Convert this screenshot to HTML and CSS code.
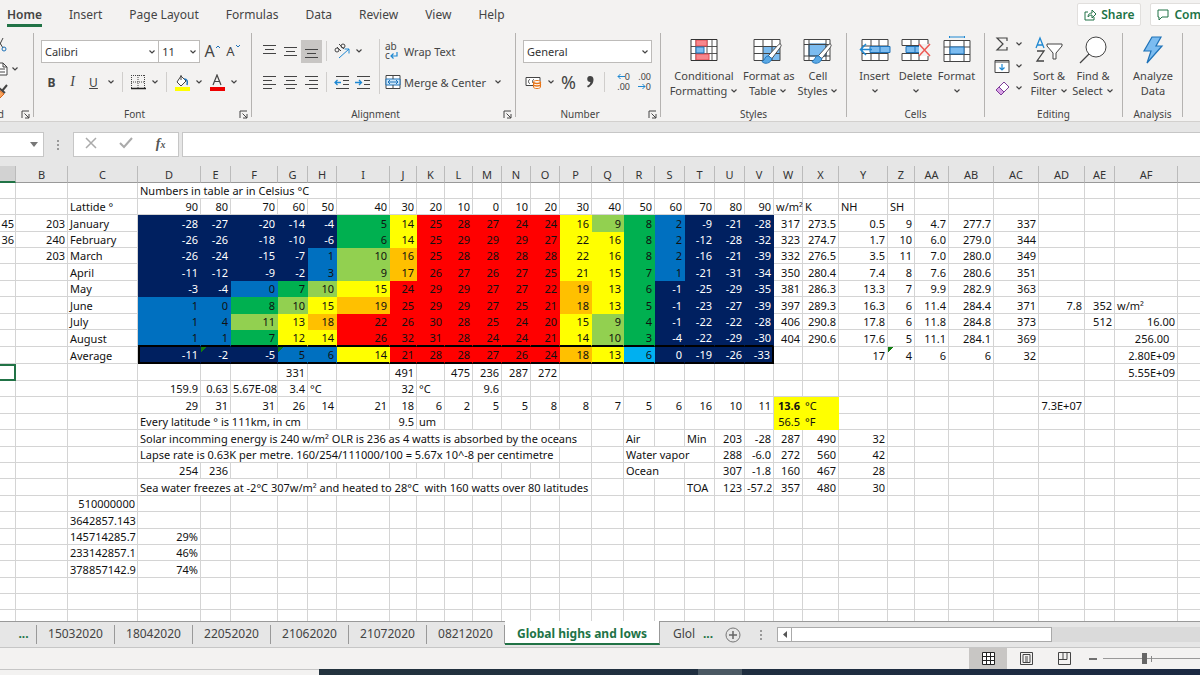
FILE: index.html
```html
<!DOCTYPE html>
<html lang="en">
<head>
    <meta charset="UTF-8">
    <meta name="viewport" content="width=device-width, initial-scale=1.0">
    <title>Global highs and lows</title>
    <link rel="stylesheet" href="styles.css">
</head>
<body>
    <svg class="defs" aria-hidden="true">
        <symbol id="chev" viewBox="0 0 8 6"><path d="M1.5 1.5 4 4l2.500-2.500" fill="none" stroke="#444" stroke-width="1.200"/></symbol>
        <symbol id="launch" viewBox="0 0 9 9"><path d="M1 8V1h7M3.500 3.500 8 8M8 4v4H4" fill="none" stroke="#444"/></symbol>
        <symbol id="brush" viewBox="0 0 24 24"><path d="M22 1c2 1 1 2 0 4l-9 12-4-3L19 3c1-1 2-2 3-2z" fill="#fff" stroke="#444"/><path d="M9 14c-4 0-3 5-7 6 3 4 10 2 11-3z" fill="#5aa9e6" stroke="#1e72b8"/></symbol>
    </svg>

    <nav class="tabs">
        <a href="#" class="active">Home</a>
        <a href="#">Insert</a>
        <a href="#">Page Layout</a>
        <a href="#">Formulas</a>
        <a href="#">Data</a>
        <a href="#">Review</a>
        <a href="#">View</a>
        <a href="#">Help</a>
        <div class="tab-actions">
            <button type="button"><svg width="13" height="12" viewBox="0 0 13 12"><path d="M4 3H1v8h9V8M4 8c0-3 2-4 4-4V1l4 4-4 4V6C6 6 5 7 4 8z" fill="none" stroke="#217346"/></svg>Share</button>
            <button type="button"><svg width="13" height="12" viewBox="0 0 13 12"><path d="M1 1h10v7H5l-3 3V8H1z" fill="none" stroke="#217346"/></svg>Comments</button>
        </div>
    </nav>

    <div class="ribbon">
        <section class="group clipboard">
            <div class="group-body clip-icons">
                <svg width="14" height="16" viewBox="0 0 14 16"><path d="M2 1l6 10" stroke="#444" fill="none"/><circle cx="9" cy="12" r="2" fill="none" stroke="#1e72b8"/><path d="M8 1 4 9" stroke="#444"/></svg>
                <div class="clip-copy"><svg width="20" height="15" viewBox="0 0 20 15"><path d="M8 2h6l4 4v8H8zM14 2v4h4M10 8h6M10 11h6" fill="#fff" stroke="#444"/></svg><svg class="chev"><use href="#chev"/></svg></div>
                <svg width="20" height="15" viewBox="0 0 20 15"><path d="m18 1-5 6M10 4l6 5" stroke="#444" stroke-width="2"/><path d="M10 6 7 12l4 2 4-4z" fill="#f7a35c" stroke="#d8641b"/></svg>
            </div>
            <footer><span class="clip-name">Clipboard</span><svg class="launch"><use href="#launch"/></svg></footer>
        </section>

        <section class="group font">
            <div class="group-body">
                <div class="row">
                    <div class="combo font-name"><select aria-label="Font"><option>Calibri</option></select><svg class="chev"><use href="#chev"/></svg></div>
                    <div class="combo font-size"><select aria-label="Font size"><option>11</option></select><svg class="chev"><use href="#chev"/></svg></div>
                    <button type="button" class="tool big-a" aria-label="Increase font size">A<svg width="6" height="5" viewBox="0 0 6 5"><path d="M1 4l2-2 2 2" fill="none" stroke="#1e72b8"/></svg></button>
                    <button type="button" class="tool small-a" aria-label="Decrease font size">A<svg width="6" height="5" viewBox="0 0 6 5"><path d="M1 1l2 2 2-2" fill="none" stroke="#1e72b8"/></svg></button>
                </div>
                <div class="row">
                    <button type="button" class="tool bold">B</button>
                    <button type="button" class="tool italic">I</button>
                    <button type="button" class="tool underline">U</button>
                    <button type="button" class="drop" aria-label="Underline options"><svg class="chev"><use href="#chev"/></svg></button>
                    <i class="sep"></i>
                    <button type="button" class="tool" aria-label="Borders"><svg width="16" height="16" viewBox="0 0 16 16"><path d="M1 1.500h14M1 8h14M1.500 1v13M8 1v13M14.500 1v13" stroke="#444" stroke-dasharray="1 1"/><path d="M1 14.500h15" stroke="#222" stroke-width="1.500"/></svg></button>
                    <button type="button" class="drop" aria-label="Border options"><svg class="chev"><use href="#chev"/></svg></button>
                    <i class="sep"></i>
                    <button type="button" class="tool" aria-label="Fill color"><svg width="16" height="17" viewBox="0 0 16 17"><path d="M7 2 3 8l4 4 5-5zM7 1v5" fill="#fff" stroke="#444"/><path d="M10 5c3 0 4 2 3 6" fill="none" stroke="#1e72b8" stroke-width="1.500"/><path d="M1 13h15v4H1z" fill="#ff0"/></svg></button>
                    <button type="button" class="drop" aria-label="Fill options"><svg class="chev"><use href="#chev"/></svg></button>
                    <button type="button" class="tool" aria-label="Font color"><svg width="16" height="17" viewBox="0 0 16 17"><path d="M4 11 8 1l4 10M5.500 7.500h5" fill="none" stroke="#444" stroke-width="1.200"/><path d="M1 13h15v4H1z" fill="#e00"/></svg></button>
                    <button type="button" class="drop" aria-label="Font color options"><svg class="chev"><use href="#chev"/></svg></button>
                </div>
            </div>
            <footer class="has-launch">Font<svg class="launch"><use href="#launch"/></svg></footer>
        </section>

        <section class="group alignment">
            <div class="group-body columns">
                <div class="align-left">
                    <div class="row">
                        <button type="button" class="tool" aria-label="Top align"><svg width="15" height="16"><path d="M1 2.500h13M3 6.500h9M1 10.500h13" stroke="#444"/></svg></button>
                        <button type="button" class="tool" aria-label="Middle align"><svg width="15" height="16"><path d="M1 4.500h13M3 8.500h9M1 12.500h13" stroke="#444"/></svg></button>
                        <button type="button" class="tool on" aria-label="Bottom align"><svg width="15" height="16"><path d="M1 6.500h13M3 10.500h9M1 14.500h13" stroke="#444"/></svg></button>
                        <i class="sep"></i>
                        <button type="button" class="tool" aria-label="Orientation"><svg width="18" height="17" viewBox="0 0 18 17"><circle cx="4" cy="7" r="2" fill="none" stroke="#444"/><path d="m4 4 4 4M6 1l5 5" stroke="#444"/><circle cx="10" cy="3" r="2" fill="none" stroke="#444"/><path d="M6 15 16 6M11.500 6H16v4.500" fill="none" stroke="#1e88d2"/></svg></button>
                        <button type="button" class="drop" aria-label="Orientation options"><svg class="chev"><use href="#chev"/></svg></button>
                    </div>
                    <div class="row">
                        <button type="button" class="tool" aria-label="Align left"><svg width="15" height="16"><path d="M1 2.500h13M1 6.500h9M1 10.500h13M1 14.500h9" stroke="#444"/></svg></button>
                        <button type="button" class="tool" aria-label="Center"><svg width="15" height="16"><path d="M1 2.500h13M3 6.500h9M1 10.500h13M3 14.500h9" stroke="#444"/></svg></button>
                        <button type="button" class="tool" aria-label="Align right"><svg width="15" height="16"><path d="M1 2.500h13M5 6.500h9M1 10.500h13M5 14.500h9" stroke="#444"/></svg></button>
                        <i class="sep"></i>
                        <button type="button" class="tool" aria-label="Decrease indent"><svg width="16" height="16"><path d="M2 2.500h13M9 6.500h6M9 10.500h6M2 14.500h13" stroke="#444"/><path d="M7 8.500H1M3.500 6 1 8.500 3.500 11" fill="none" stroke="#1e88d2" stroke-width="1.300"/></svg></button>
                        <button type="button" class="tool" aria-label="Increase indent"><svg width="16" height="16"><path d="M2 2.500h13M9 6.500h6M9 10.500h6M2 14.500h13" stroke="#444"/><path d="M0 8.500h6M4 6l2.500 2.500L4 11" fill="none" stroke="#1e88d2" stroke-width="1.300"/></svg></button>
                    </div>
                </div>
                <div class="align-right">
                    <div class="row">
                        <button type="button" class="labelled"><span class="wrap-icon" aria-hidden="true">ab<br>c<svg width="8" height="7" viewBox="0 0 8 7"><path d="M7 0v4H1M3.500 1.500 1 4l2.500 2.500" fill="none" stroke="#1e88d2" stroke-width="1.200"/></svg></span>Wrap Text</button>
                    </div>
                    <div class="row">
                        <button type="button" class="labelled"><svg width="16" height="16"><path d="M1 1.500h14v13H1z" fill="#fff" stroke="#444"/><path d="M1 5h14v6H1z" fill="#cfe8fa" stroke="#1e72b8"/><path d="M8 1v4M8 11v4" stroke="#444"/><path d="M3 8h10M5 6 3 8l2 2M11 6l2 2-2 2" fill="none" stroke="#1e72b8"/></svg>Merge &amp; Center</button>
                        <button type="button" class="drop" aria-label="Merge options"><svg class="chev"><use href="#chev"/></svg></button>
                    </div>
                </div>
            </div>
            <footer class="has-launch">Alignment<svg class="launch"><use href="#launch"/></svg></footer>
        </section>

        <section class="group number">
            <div class="group-body">
                <div class="row">
                    <div class="combo number-format"><select aria-label="Number format"><option>General</option></select><svg class="chev"><use href="#chev"/></svg></div>
                </div>
                <div class="row">
                    <button type="button" class="tool" aria-label="Accounting format"><svg width="17" height="15" viewBox="0 0 17 15"><path d="M1 2.500h14v8H1z" fill="#fff" stroke="#444"/><path d="M5 4.500c-2 0-2 4 0 4M9 4.500c-2 0-2 4 0 4" fill="none" stroke="#444"/><path d="M8.500 7c0-2 7-2 7 0v5c0 2-7 2-7 0z" fill="#fff" stroke="#e8761b"/><path d="M8.500 7c0 2 7 2 7 0M8.500 9.500c0 2 7 2 7 0" fill="none" stroke="#e8761b" stroke-width="1.500"/></svg></button>
                    <button type="button" class="drop" aria-label="Currency options"><svg class="chev"><use href="#chev"/></svg></button>
                    <button type="button" class="tool percent">%</button>
                    <button type="button" class="tool" aria-label="Comma style"><svg width="10" height="14" viewBox="0 0 10 14"><path d="M5 1a3 3 0 1 0 .5 6C5 9 4 10 2 11l1 1.500c3-1.500 5.500-4 5.500-8C8.500 2 7 1 5 1z" fill="#444"/></svg></button>
                    <i class="sep"></i>
                    <button type="button" class="tool decimals"><svg width="8" height="7" viewBox="0 0 8 7"><path d="M8 3.500H1M3.500 1 1 3.500 3.500 6" fill="none" stroke="#1e88d2"/></svg>0<br>.00</button>
                    <button type="button" class="tool decimals">.00<br><svg width="8" height="7" viewBox="0 0 8 7"><path d="M0 3.500h7M4.500 1 7 3.500 4.500 6" fill="none" stroke="#1e88d2"/></svg>0</button>
                </div>
            </div>
            <footer class="has-launch">Number<svg class="launch"><use href="#launch"/></svg></footer>
        </section>

        <section class="group styles">
            <div class="group-body columns">
                <button type="button" class="large wide"><svg width="28" height="28" viewBox="0 0 28 28"><g transform="translate(0 2)"><path d="M1 1.500h26v21H1z" fill="#fff"/><path d="M1 8.500h26M1 15.500h26M6 1v22M17 1v22M22 1v22" stroke="#555"/><path d="M6 2h11v6H6zM6 16h13v6H6z" fill="#f7868c" stroke="#e04a52"/><path d="M6 9h8v6H6z" fill="#7cbcf0" stroke="#1e72b8"/><path d="M1 1.500h26v21H1z" fill="none" stroke="#333"/></g></svg>Conditional<br><span>Formatting<svg class="chev"><use href="#chev"/></svg></span></button>
                <button type="button" class="large mid"><svg width="30" height="28" viewBox="0 0 30 28"><path d="M1 3.500h26v21H1z" fill="#fff"/><path d="M10 11h17v14H10z" fill="#7cbcf0"/><path d="M1 10.500h26M1 17.500h26M10 3v21M19 3v21M1 3.500h26v21H1z" fill="none" stroke="#444"/><use href="#brush" x="7" y="7" width="22" height="22"/></svg>Format as<br><span>Table<svg class="chev"><use href="#chev"/></svg></span></button>
                <button type="button" class="large mid"><svg width="30" height="28" viewBox="0 0 30 28"><path d="M1 3.500h26v21H1z" fill="#fff"/><path d="M6 8h17v12H6z" fill="#7cbcf0" stroke="#1e72b8"/><path d="M1 8.500h26M6 3v21M1 20h26M23 3v21M1 3.500h26v21H1z" fill="none" stroke="#444"/><use href="#brush" x="7" y="7" width="22" height="22"/></svg>Cell<br><span>Styles<svg class="chev"><use href="#chev"/></svg></span></button>
            </div>
            <footer>Styles</footer>
        </section>

        <section class="group cells">
            <div class="group-body columns">
                <button type="button" class="large"><svg width="32" height="28" viewBox="0 0 32 28"><g transform="translate(0 2)"><path d="M3 1.500h26v21H3zM3 8h26M3 15.500h26M12 1v7M20 1v7M12 15v7M20 15v7" fill="#fff" stroke="#444"/><path d="M11 8.500h20v6H11z" fill="#7cbcf0" stroke="#1e72b8"/><path d="M21 8v7" stroke="#1e72b8"/><path d="M13 11.500H2M7 6l-5.500 5.500L7 17" fill="none" stroke="#1e88d2" stroke-width="1.500"/></g></svg>Insert<br><svg class="chev"><use href="#chev"/></svg></button>
                <button type="button" class="large"><svg width="30" height="28" viewBox="0 0 30 28"><g transform="translate(0 2)"><path d="M1 1.500h26v6H1zM1 15.500h26v7H1zM10 1v7M18 1v7M10 15v7M18 15v7" fill="#fff" stroke="#444"/><path d="M5 8.500h14v6H5z" fill="#7cbcf0" stroke="#1e72b8"/><path d="M14 8v7" stroke="#1e72b8"/><path d="M18 6h12v12H18z" fill="#f3f2f1"/><path d="m18 6 11 12M29 6 18 18" stroke="#ee5a55" stroke-width="1.500"/></g></svg>Delete<br><svg class="chev"><use href="#chev"/></svg></button>
                <button type="button" class="large"><svg width="28" height="28" viewBox="0 0 28 28"><path d="M1 4.500h26v21H1zM1 11h26M1 18.500h26M7 4v21M21 4v21" fill="#fff" stroke="#444"/><path d="M7 11h14v7H7z" fill="#7cbcf0" stroke="#1e72b8"/><path d="M7 1h14M6.500 0v2M21.500 0v2" stroke="#1e88d2"/></svg>Format<br><svg class="chev"><use href="#chev"/></svg></button>
            </div>
            <footer>Cells</footer>
        </section>

        <section class="group editing">
            <div class="group-body columns">
                <div class="edit-tools">
                    <button type="button" aria-label="AutoSum"><svg width="16" height="15" viewBox="0 0 16 15"><path d="M13 4V1H3l6 6-6 6h10v-3" fill="none" stroke="#444" stroke-width="1.200"/></svg><svg class="chev"><use href="#chev"/></svg></button>
                    <button type="button" aria-label="Fill"><svg width="16" height="15" viewBox="0 0 16 15"><path d="M1 1.500h14v12H1z" fill="#fff" stroke="#444"/><path d="M1 3h14" stroke="#444"/><path d="M8 5v6M5.500 8.500 8 11l2.500-2.500" fill="none" stroke="#1e88d2" stroke-width="1.200"/></svg><svg class="chev"><use href="#chev"/></svg></button>
                    <button type="button" aria-label="Clear"><svg width="16" height="15" viewBox="0 0 16 15"><path d="m10 1 5 5-8 8-5-5z" fill="#fff" stroke="#7d3c98"/><path d="m5 6 5 5-3 3-5-5z" fill="#d9a3e6" stroke="#7d3c98"/></svg><svg class="chev"><use href="#chev"/></svg></button>
                </div>
                <button type="button" class="large"><svg width="30" height="28" viewBox="0 0 30 28"><path d="m2 12 4-10 4 10M3.500 9h5" fill="none" stroke="#1e88d2" stroke-width="1.300"/><path d="M3 15h7L3 25h7" fill="none" stroke="#444" stroke-width="1.300"/><path d="M13 8h15v2l-6 7v6h-3v-6l-6-7z" fill="#fff" stroke="#444"/></svg>Sort &amp;<br><span>Filter<svg class="chev"><use href="#chev"/></svg></span></button>
                <button type="button" class="large"><svg width="30" height="28" viewBox="0 0 30 28"><circle cx="18" cy="11" r="10" fill="#fff" stroke="#444"/><path d="m11 18-9 9" stroke="#444" stroke-width="1.200"/></svg>Find &amp;<br><span>Select<svg class="chev"><use href="#chev"/></svg></span></button>
            </div>
            <footer>Editing</footer>
        </section>

        <section class="group analysis">
            <div class="group-body columns">
                <button type="button" class="large"><svg width="24" height="28" viewBox="0 0 24 28"><path d="M11 1h9l-5 9h6L6 27l4-12H3z" fill="#7cbcf0" stroke="#1e72b8" stroke-width="1.200"/></svg>Analyze<br>Data</button>
            </div>
            <footer>Analysis</footer>
        </section>
    </div>

    <div class="formula-bar">
        <div class="name-box"><svg width="8" height="5"><path d="M0 0h8L4 5z" fill="#777"/></svg></div>
        <i class="dots"></i>
        <div class="formula-buttons">
            <button type="button" aria-label="Cancel"><svg width="12" height="12"><path d="m1 1 10 10M11 1 1 11" stroke="#aaa" stroke-width="1.500"/></svg></button>
            <button type="button" aria-label="Enter"><svg width="14" height="12"><path d="m1 6 4 4 8-9" fill="none" stroke="#aaa" stroke-width="2"/></svg></button>
            <button type="button" class="fx" aria-label="Insert function">f<sub>x</sub></button>
        </div>
        <input type="text" class="formula" aria-label="Formula">
    </div>

    <main class="sheet">
        <table>
            <colgroup id="cols"></colgroup>
            <thead><tr id="heads"></tr></thead>
            <tbody id="cells"></tbody>
        </table>
    </main>

    <div class="sheet-tabs">
        <a href="#" class="more">...</a>
        <a href="#">15032020</a>
        <a href="#">18042020</a>
        <a href="#">22052020</a>
        <a href="#">21062020</a>
        <a href="#">21072020</a>
        <a href="#">08212020</a>
        <a href="#" class="current">Global highs and lows</a>
        <a href="#" class="cut">Glol</a>
        <a href="#" class="more-right">...</a>
        <button type="button" class="add-sheet" aria-label="New sheet"><svg width="16" height="16"><circle cx="8" cy="8" r="7" fill="none" stroke="#777"/><path d="M8 4v8M4 8h8" stroke="#666" stroke-width="1.500"/></svg></button>
        <i class="dots"></i>
        <div class="scrollbar">
            <button type="button" aria-label="Scroll left"><svg width="4" height="7"><path d="M4 0v7L0 3.500z" fill="#555"/></svg></button>
            <div class="thumb"></div>
        </div>
    </div>

    <div class="status-bar">
        <button type="button" class="on" aria-label="Normal view"><svg width="13" height="13"><path d="M.5.5h12v12H.5zM.5 4.500h12M.5 8.500h12M4.500.5v12M8.500.5v12" fill="#fff" stroke="#222"/></svg></button>
        <button type="button" aria-label="Page layout view"><svg width="13" height="13"><path d="M.5.5h12v12H.5zM3 2.500h7v8H3zM5 5h3M5 7h3M5 9h3" fill="none" stroke="#444"/></svg></button>
        <button type="button" aria-label="Page break view"><svg width="13" height="13"><path d="M.5.5h12v12H.5zM5 .5v7h4v-7M.5 7.500h5" fill="none" stroke="#444"/></svg></button>
        <button type="button" class="zoom-out" aria-label="Zoom out"><svg width="8" height="2"><path d="M0 1h8" stroke="#444" stroke-width="1.500"/></svg></button>
        <div class="zoom"><input type="range" min="0" max="100" value="42" aria-label="Zoom"></div>
    </div>
    <div class="taskbar"><i></i></div>

    <script>
        const columns = [
            ['A', 16], ['B', 52], ['C', 70], ['D', 63], ['E', 30], ['F', 47], ['G', 30], ['H', 29], ['I', 53],
            ['J', 27], ['K', 28], ['L', 28], ['M', 29], ['N', 29], ['O', 29], ['P', 32], ['Q', 32], ['R', 31],
            ['S', 30], ['T', 30], ['U', 30], ['V', 29], ['W', 29], ['X', 36], ['Y', 49], ['Z', 27], ['AA', 34],
            ['AB', 45], ['AC', 45], ['AD', 46], ['AE', 30], ['AF', 63], ['AG', 63], ['AH', 63], ['AI', 63], ['AJ', 63]
        ];
        const names = columns.map(c => c[0]);

        const fills = { n: 'navy', b: 'blue', c: 'cyan', g: 'green', l: 'lime', y: 'yellow', o: 'orange', r: 'red' };

        // A list of values fills the columns to the right of its key, span lets long text run over empty cells.
        // fill holds one letter per cell, starting at column D.
        const rows = [
            { D: { text: 'Numbers in table ar in Celsius °C', span: 5 } },
            { C: 'Lattide °', D: [90, 80, 70, 60, 50, 40, 30, 20, 10, 0, 10, 20, 30, 40, 50, 60, 70, 80, 90, 'w/m²', 'K', 'NH', 'SH'] },
            { A: 45, B: 203, C: 'January', D: [-28, -27, -20, -14, -4, 5, 14, 25, 28, 27, 24, 24, 16, 9, 8, 2, -9, -21, -28, 317, '273.5', '0.5', 9, '4.7', '277.7', 337], fill: 'nnnnngyrrrrrylgbnnn', tall: true },
            { A: 36, B: 240, C: 'February', D: [-26, -26, -18, -10, -6, 6, 14, 25, 29, 29, 29, 27, 22, 16, 8, 2, -12, -28, -32, 323, '274.7', '1.7', 10, '6.0', '279.0', 344], fill: 'nnnnngyrrrrryygbnnn' },
            { B: 203, C: 'March', D: [-26, -24, -15, -7, 1, 10, 16, 25, 28, 28, 28, 28, 22, 16, 8, 2, -16, -21, -39, 332, '276.5', '3.5', 11, '7.0', '280.0', 349], fill: 'nnnnblorrrrryygbnnn' },
            { C: 'April', D: [-11, -12, -9, -2, 3, 9, 17, 26, 27, 26, 27, 25, 21, 15, 7, 1, -21, -31, -34, 350, '280.4', '7.4', 8, '7.6', '280.6', 351], fill: 'nnnnblorrrrryygbnnn', tall: true },
            { C: 'May', D: [-3, -4, 0, 7, 10, 15, 24, 29, 29, 27, 27, 22, 19, 13, 6, -1, -25, -29, -35, 381, '286.3', '13.3', 7, '9.9', '282.9', 363], fill: 'nnbglyrrrrrroygnnnn' },
            { C: 'June', D: [1, 0, 8, 10, 15, 19, 25, 29, 29, 27, 25, 21, 18, 13, 5, -1, -23, -27, -39, 397, '289.3', '16.3', 6, '11.4', '284.4', 371, '7.8', 352, 'w/m²'], fill: 'bbglyorrrrrroygnnnn', tall: true },
            { C: 'July', D: [1, 4, 11, 13, 18, 22, 26, 30, 28, 25, 24, 20, 15, 9, 4, -1, -22, -22, -28, 406, '290.8', '17.8', 6, '11.8', '284.8', 373], AE: 512, AF: '16.00', fill: 'bblyorrrrrrrylgnnnn' },
            { C: 'August', D: [1, 1, 7, 12, 14, 26, 32, 31, 28, 24, 24, 21, 14, 10, 3, -4, -22, -29, -30, 404, '290.6', '17.6', 5, '11.1', '284.1', 369], AF: '256.00 \u00a0', fill: 'bbgyyrrrrrrrylgnnnn', tall: true, name: 'last' },
            { C: 'Average', D: [-11, -2, -5, 5, 6, 14, 21, 28, 28, 27, 26, 24, 18, 13, 6, 0, -19, -26, -33], Y: [17, 4, 6, 6, 32], AF: '2.80E+09', fill: 'nnnbbyrrrrrroycnnnn', tall: true, name: 'average', flags: ['E', 'G', 'Z'] },
            { G: 331, J: 491, L: [475, 236, 287, 272], AF: '5.55E+09', tall: true, selected: 'A' },
            { D: ['159.9', '0.63', '5.67E-08', '3.4', '°C'], J: [32, '°C'], M: '9.6' },
            { D: [29, 31, 31, 26, 14, 21, 18, 6, 2, 5, 5, 8, 8, 7, 5, 6, 16, 10, 11, '13.6', '°C'], AD: '7.3E+07', fill: '                   yy', tall: true, bold: 'W' },
            { D: { text: 'Every latitude ° is 111km, in cm', span: 4 }, J: ['9.5', 'um'], W: ['56.5', '°F'], fill: '                   yy' },
            { D: { text: 'Solar incomming energy is 240 w/m² OLR is 236 as 4 watts is absorbed by the oceans', span: 13 }, R: 'Air', T: ['Min', 203, -28, 287, 490, 32], tall: true },
            { D: { text: 'Lapse rate is 0.63K per metre. 160/254/111000/100 = 5.67x 10^-8 per centimetre', span: 12 }, R: { text: 'Water vapor', span: 3 }, U: [288, '-6.0', 272, 560, 42] },
            { D: [254, 236], R: { text: 'Ocean', span: 2 }, U: [307, '-1.8', 160, 467, 28] },
            { D: { text: 'Sea water freezes at -2°C 307w/m² and heated to 28°C \u00a0with 160 watts over 80 latitudes', span: 13 }, T: ['TOA', 123, '-57.2', 357, 480, 30], tall: true },
            { C: 510000000 },
            { C: ['3642857.143'], tall: true },
            { C: ['145714285.7', '29%'] },
            { C: ['233142857.1', '46%'] },
            { C: ['378857142.9', '74%'], tall: true },
            {}, {}, {}
        ];

        const heads = document.getElementById('heads');
        columns.forEach(([name, width]) => {
            const col = document.createElement('col');
            col.style.width = width + 'px';
            document.getElementById('cols').appendChild(col);
            const th = document.createElement('th');
            // column A is scrolled almost out of view, so it has no room for its letter
            if (name === 'A') {
                th.className = 'selected';
            } else {
                th.textContent = name;
            }
            heads.appendChild(th);
        });

        rows.forEach(row => {
            const tr = document.createElement('tr');
            tr.className = [row.tall ? 'tall' : '', row.name || ''].join(' ').trim();
            const values = {};
            names.forEach((name, i) => {
                if (Array.isArray(row[name])) {
                    row[name].forEach((value, j) => values[names[i + j]] = value);
                } else if (row[name] !== undefined) {
                    values[name] = row[name];
                }
            });
            for (let i = 0; i < names.length; i++) {
                const name = names[i];
                const td = document.createElement('td');
                let value = values[name] === undefined ? '' : values[name];
                if (value.span) {
                    td.colSpan = value.span;
                    i += value.span - 1;
                    value = value.text;
                }
                td.textContent = value;
                if (/^-?[\d.]+(E[+-]\d+)?%?\s*$/.test(String(value))) td.classList.add('num');
                const fill = fills[(row.fill || '')[names.indexOf(name) - 3]];
                if (fill) td.classList.add('fill', fill);
                if ((row.flags || []).includes(name)) td.classList.add('flag');
                if (row.bold === name) td.classList.add('strong');
                if (row.selected === name) td.classList.add('cursor');
                tr.appendChild(td);
            }
            document.getElementById('cells').appendChild(tr);
        });
    </script>
</body>
</html>
```
FILE: styles.css
```css
* {
    box-sizing: border-box;
}

body {
    margin: 0;
    height: 100vh;
    display: flex;
    flex-direction: column;
    overflow: hidden;
    background-color: #f3f2f1;
    color: #444;
    font-family: "Noto Sans", "Open Sans", sans-serif;
    font-size: 11px;
}

button, select, input {
    font: inherit;
    color: inherit;
    margin: 0;
    padding: 0;
    border: none;
    background: none;
}

a {
    color: inherit;
    text-decoration: none;
}

.defs {
    position: absolute;
    width: 0;
    height: 0;
}

.chev {
    width: 8px;
    height: 6px;
    flex: none;
}

/* Ribbon tabs */
.tabs {
    display: flex;
    align-items: flex-start;
    flex: none;
    height: 31px;
    padding: 4px 0 0 7px;
    gap: 27px;
    font-size: 12px;
    white-space: nowrap;
}

.tabs > a {
    height: 23px;
    line-height: 22px;
}

.tabs > a.active {
    font-weight: 600;
    border-bottom: 3px solid #217346;
}

.tab-actions {
    display: flex;
    gap: 9px;
    margin: -1px -45px 0 auto;
}

.tab-actions button {
    display: flex;
    align-items: center;
    gap: 4px;
    height: 23px;
    padding: 0 6px;
    background-color: #fff;
    border: 1px solid #e1dfdd;
    border-radius: 2px;
    color: #217346;
    font-weight: 600;
}

/* Ribbon */
.ribbon {
    display: flex;
    flex: none;
    height: 91px;
    padding: 2px 0 4px;
    border-bottom: 1px solid #d2d0ce;
    white-space: nowrap;
}

.group {
    display: flex;
    flex-direction: column;
    flex: none;
    border-right: 1px solid #b5b3b1;
    padding: 0 7px;
}

.group-body {
    flex: 1;
    min-height: 0;
}

.group-body.columns {
    display: flex;
}

.group footer {
    position: relative;
    height: 14px;
    margin-bottom: -4px;
    line-height: 14px;
    font-size: 10px;
    text-align: center;
}

.group .has-launch {
    padding-right: 16px;
}

.launch {
    position: absolute;
    right: -4px;
    top: 3px;
    width: 9px;
    height: 9px;
}

.row {
    display: flex;
    align-items: center;
    height: 24px;
    margin: 6px 0 7px;
}

.tool {
    display: flex;
    align-items: center;
    justify-content: center;
    width: 21px;
    height: 23px;
    flex: none;
}

.tool.on {
    background-color: #c8c6c4;
}

.drop {
    display: flex;
    align-items: center;
    justify-content: center;
    width: 14px;
    height: 23px;
}

.sep {
    width: 1px;
    height: 20px;
    margin: 0 4px;
    background-color: #d0cecc;
}

.combo {
    position: relative;
    height: 23px;
    border: 1px solid #bdbbb9;
    background-color: #fff;
}

.combo select {
    width: 100%;
    height: 100%;
    padding: 0 3px;
    appearance: none;
    color: #333;
}

.combo .chev {
    position: absolute;
    right: 2px;
    top: 8px;
    pointer-events: none;
}

.clipboard {
    width: 34px;
}

.clip-icons {
    display: flex;
    flex-direction: column;
    gap: 8px;
    padding-top: 4px;
    margin-left: -18px;
}

.clip-icons > svg:first-child {
    margin-left: 6px;
}

.clip-copy {
    display: flex;
    align-items: center;
    gap: 2px;
}

.clip-name {
    float: right;
    margin-right: 22px;
}

.font {
    width: 218px;
}

.font-name {
    width: 119px;
}

.font-size {
    width: 42px;
    margin-left: -1px;
}

.big-a {
    font-size: 16px;
    margin-left: 2px;
}

.small-a {
    font-size: 13px;
}

.big-a svg, .small-a svg {
    margin-bottom: 10px;
}

.bold {
    font-weight: 700;
    font-size: 12px;
}

.italic {
    font-family: "Liberation Serif", serif;
    font-style: italic;
    font-size: 14px;
}

.underline {
    font-size: 12px;
    text-decoration: underline;
}

.alignment {
    width: 264px;
}

.align-left {
    width: 120px;
}

.align-right {
    height: 55px;
    margin-top: 6px;
    padding-left: 5px;
    border-left: 1px solid #d0cecc;
}

.align-right .row:first-child {
    margin-top: 0;
}

.labelled {
    display: flex;
    align-items: center;
    gap: 3px;
    margin-right: 5px;
}

.wrap-icon {
    width: 16px;
    font-size: 10px;
    line-height: 9px;
    text-align: left;
}

.number {
    width: 145px;
}

.number-format {
    width: 129px;
}

.percent {
    font-size: 18px;
}

.decimals {
    display: block;
    font-size: 9px;
    line-height: 10px;
    text-align: right;
}

.large {
    width: 41px;
    padding-top: 3px;
    line-height: 15px;
    text-align: center;
    display: block;
    flex: none;
    align-self: flex-start;
}

.large > svg:first-child {
    display: block;
    height: 28px;
    margin: 0 auto 4px;
}

.large .chev {
    margin: 0 0 1px 3px;
}

.large > .chev {
    margin-left: 0;
}

.styles {
    width: 186px;
    padding: 0 4px;
}

.wide {
    width: 78px;
}

.mid {
    width: 50px;
}

.cells {
    width: 138px;
}

.editing {
    width: 138px;
    padding: 0 4px;
}

.editing .large {
    width: 44px;
}

.edit-tools {
    width: 38px;
    padding: 0 0 0 5px;
}

.edit-tools button {
    display: flex;
    align-items: center;
    gap: 5px;
    height: 22px;
}

.analysis {
    width: 60px;
}

.analysis .large {
    width: 46px;
}

/* Formula bar */
.formula-bar {
    display: flex;
    flex: none;
    height: 44px;
    padding: 10px 0 9px;
    background-color: #e6e6e6;
}

.name-box {
    display: flex;
    align-items: center;
    justify-content: flex-end;
    width: 44px;
    padding-right: 5px;
    background-color: #fff;
    border: 1px solid #c6c6c6;
    border-left: none;
}

.dots {
    align-self: center;
    width: 2px;
    height: 10px;
    background: repeating-linear-gradient(#999 0 2px, transparent 2px 4px);
}

.formula-bar .dots {
    margin: 0 14px 0 13px;
}

.formula-buttons {
    display: flex;
    width: 106px;
    background-color: #fff;
    border: 1px solid #c6c6c6;
}

.formula-buttons button {
    flex: 1;
}

.formula-buttons .fx {
    font-family: "Liberation Serif", serif;
    font-style: italic;
    font-weight: 700;
    font-size: 14px;
    line-height: 14px;
    color: #555;
}

.fx sub {
    font-size: 10px;
    vertical-align: baseline;
}

.formula {
    flex: 1;
    margin-left: 3px;
    background-color: #fff;
    border: 1px solid #c6c6c6;
    border-right: none;
}

/* Grid */
.sheet {
    flex: 1;
    min-height: 0;
    overflow: hidden;
    background-color: #fff;
}

table {
    width: 0;
    table-layout: fixed;
    border-collapse: separate;
    border-spacing: 0;
    color: #111;
}

th {
    height: 17px;
    padding: 0;
    background-color: #e6e6e6;
    border-right: 1px solid #bbb;
    border-bottom: 1px solid #999;
    color: #333;
    font-weight: 400;
    line-height: 15px;
}

th.selected {
    background-color: #d2d2d2;
    border-bottom: 2px solid #217346;
}

td {
    height: 16px;
    padding: 0 2px;
    border-right: 1px solid #d4d4d4;
    border-bottom: 1px solid #d4d4d4;
    line-height: 15px;
    white-space: nowrap;
}

.tall td {
    height: 17px;
}

.num {
    text-align: right;
}

td:first-child {
    direction: rtl;
}

.strong {
    font-weight: 700;
}

.navy { background-color: #002060; border-color: #002060; color: #fff; }
.blue { background-color: #0070c0; border-color: #0070c0; }
.cyan { background-color: #00b0f0; border-color: #00b0f0; }
.green { background-color: #00b050; border-color: #00b050; }
.lime { background-color: #92d050; border-color: #92d050; }
.yellow { background-color: #ff0; border-color: #ff0; }
.orange { background-color: #ffc000; border-color: #ffc000; }
.red { background-color: #f00; border-color: #f00; }

.last .fill, .average .fill {
    border-bottom: 2px solid #000;
}

.average td:nth-child(4) {
    border-left: 2px solid #000;
}

.average td:nth-child(22) {
    border-right: 2px solid #000;
}

.flag {
    background-image: linear-gradient(135deg, #107c10 4px, transparent 4px);
}

.cursor {
    border: 2px solid #217346;
    border-left: none;
}

/* Sheet tabs */
.sheet-tabs {
    display: flex;
    align-items: center;
    flex: none;
    height: 27px;
    background-color: #e6e6e6;
    border-top: 1px solid #999;
    border-bottom: 1px solid #c6c6c6;
    font-size: 12px;
    white-space: nowrap;
}

.sheet-tabs a {
    width: 78px;
    height: 19px;
    line-height: 18px;
    border-right: 1px solid #999;
    text-align: center;
    flex: none;
}

.sheet-tabs .more {
    width: 37px;
    padding-left: 11px;
    color: #217346;
    font-weight: 700;
}

.sheet-tabs .current {
    width: 155px;
    height: 24px;
    line-height: 26px;
    align-self: flex-start;
    margin-top: -1px;
    background-color: #fff;
    border-bottom: 2px solid #217346;
    color: #217346;
    font-weight: 700;
}

.sheet-tabs .cut {
    width: 38px;
    padding-left: 10px;
    border: none;
}

.sheet-tabs .more-right {
    width: 20px;
    border: none;
    color: #217346;
    font-weight: 700;
}

.add-sheet {
    display: flex;
    margin: 0 19px 0 7px;
}

.scrollbar {
    display: flex;
    flex: 1;
    height: 15px;
    margin-left: 15px;
    background-color: #dadada;
}

.scrollbar button {
    display: flex;
    align-items: center;
    justify-content: center;
    width: 15px;
    background-color: #fff;
    border: 1px solid #aaa;
}

.thumb {
    width: 65%;
    max-width: 260px;
    background-color: #fff;
    border: 1px solid #aaa;
    border-left: none;
}

/* Status bar */
.status-bar {
    display: flex;
    align-items: center;
    justify-content: flex-end;
    flex: none;
    height: 21px;
}

.status-bar button {
    display: flex;
    align-items: center;
    justify-content: center;
    width: 38px;
    height: 21px;
}

.status-bar .on {
    background-color: #c8c6c4;
}

.status-bar .zoom-out {
    width: 20px;
}

.zoom {
    position: relative;
    width: 97px;
    height: 21px;
}

.zoom::after {
    content: "";
    position: absolute;
    left: 48px;
    top: 8px;
    width: 1px;
    height: 6px;
    background-color: #888;
}

.zoom input {
    display: block;
    width: 100%;
    height: 21px;
    appearance: none;
    background: linear-gradient(#999, #999) center / 100% 1px no-repeat;
}

.zoom input::-webkit-slider-thumb {
    appearance: none;
    width: 5px;
    height: 11px;
    background-color: #666;
}

.taskbar {
    display: flex;
    flex: none;
    height: 6px;
    border-top: 1px solid #c6c6c6;
}

.taskbar i {
    flex: 1;
    margin: -1px 0 0 319px;
    background: linear-gradient(90deg, transparent 43%, #4a5863 43% 48%, transparent 48%), linear-gradient(90deg, #23333e, #1b2942);
}
```
